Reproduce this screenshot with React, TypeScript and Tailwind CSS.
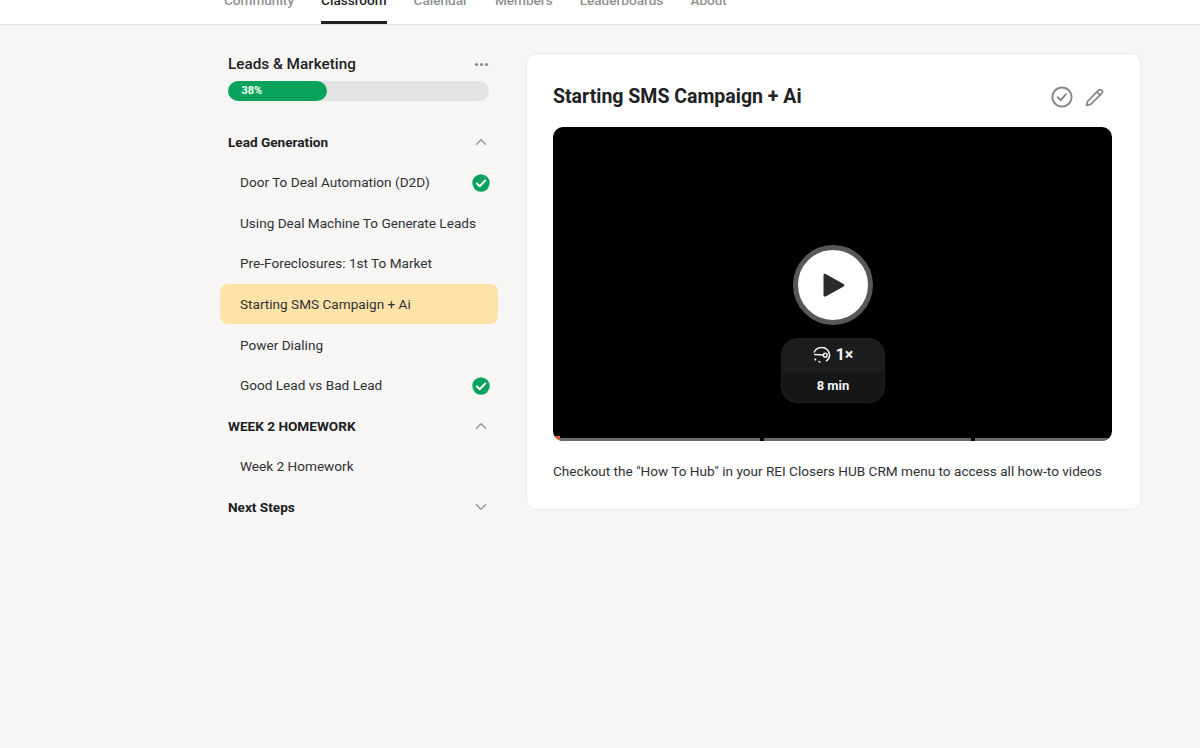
import React from 'react';
import { ChevronUp, ChevronDown, Pencil } from 'lucide-react';

const tabs = ['Community', 'Classroom', 'Calendar', 'Members', 'Leaderboards', 'About'];

type Lesson = { title: string; done?: boolean; active?: boolean };
type Section = { title: string; open: boolean; lessons: Lesson[] };

const sections: Section[] = [
    {
        title: 'Lead Generation',
        open: true,
        lessons: [
            { title: 'Door To Deal Automation (D2D)', done: true },
            { title: 'Using Deal Machine To Generate Leads' },
            { title: 'Pre-Foreclosures: 1st To Market' },
            { title: 'Starting SMS Campaign + Ai', active: true },
            { title: 'Power Dialing' },
            { title: 'Good Lead vs Bad Lead', done: true },
        ],
    },
    { title: 'WEEK 2 HOMEWORK', open: true, lessons: [{ title: 'Week 2 Homework' }] },
    { title: 'Next Steps', open: false, lessons: [] },
];

const DoneBadge = () => (
    <svg width="18" height="18" viewBox="0 0 18 18" className="shrink-0 mt-[2px]">
        <circle cx="9" cy="9" r="8.7" fill="#0aa35e" />
        <path d="M4.8 9.4l2.9 2.8 5.6-5.8" fill="none" stroke="#fff" strokeWidth="2" strokeLinecap="round" strokeLinejoin="round" />
    </svg>
);

const SpeedIcon = () => (
    <svg width="18" height="18" viewBox="0 0 18 18" fill="none" stroke="#f2f2f2" strokeWidth="1.5" strokeLinecap="round">
        <path d="M1.2 6C2.8 3 5.6 1.6 8.8 1.6a7.6 7.6 0 0 1 7.8 7.6c0 2.2-1.2 4.2-3.2 5.6" />
        <path d="M1.6 8.6l8.8.4" />
        <circle cx="12.2" cy="9.2" r="1.9" />
        <path d="M2 13l.6.9M6 15.6l.9.3" />
    </svg>
);

const App = () => {
    return (
        <div className="min-h-[748px] bg-[#f7f6f4] font-['Roboto',sans-serif] text-[#202124]">
            <div className="h-[25px] bg-white border-b border-[#e4e4e4] overflow-hidden">
                <div className="flex gap-[27px] pl-[224px] -mt-[10px] h-[34px]">
                    {tabs.map((tab) => (
                        <div
                            key={tab}
                            className={`flex items-start h-full text-[13.6px] font-medium leading-[20px] ${
                                tab === 'Classroom' ? 'text-[#202124] border-b-[3px] border-[#202124]' : 'text-[#909090]'
                            }`}
                        >
                            {tab}
                        </div>
                    ))}
                </div>
            </div>

            <div className="flex items-start gap-[28px] pl-[220px] pt-[28px]">
                <div className="w-[278px]">
                    <div className="px-2">
                        <div className="flex items-center justify-between h-[24px] mt-[-1px] pr-[1px]">
                            <span className="text-[15.3px] font-medium leading-[24px]">Leads &amp; Marketing</span>
                            <svg width="15" height="5" viewBox="0 0 15 5" fill="#8a8a8a">
                                <circle cx="2.5" cy="2.5" r="1.6" />
                                <circle cx="7.5" cy="2.5" r="1.6" />
                                <circle cx="12.5" cy="2.5" r="1.6" />
                            </svg>
                        </div>
                        <div className="mt-[5px] h-[20px] rounded-full bg-[#e4e4e4] w-[261px]">
                            <div className="flex items-center h-full w-[99px] rounded-full bg-[#0aa35e] pl-[13.5px] text-[11px] font-bold text-[#f3fff8]">
                                38%
                            </div>
                        </div>
                    </div>

                    <div className="mt-[20.5px]">
                        {sections.map((section) => (
                            <div key={section.title}>
                                <div className="flex items-center justify-between h-[40.6px] pl-2 pr-[8px]">
                                    <span className="text-[13.6px] font-bold">{section.title}</span>
                                    {section.open ? (
                                        <ChevronUp size={18} strokeWidth={2} className="text-[#999999]" />
                                    ) : (
                                        <ChevronDown size={18} strokeWidth={2} className="text-[#999999]" />
                                    )}
                                </div>
                                {section.lessons.map((lesson) => (
                                    <div
                                        key={lesson.title}
                                        className={`flex items-center justify-between h-[40.6px] pl-5 pr-[8px] text-[13.6px] rounded-lg ${
                                            lesson.active ? 'bg-[#fce4a8]' : ''
                                        }`}
                                    >
                                        <span className="text-[#303134]">{lesson.title}</span>
                                        {lesson.done && <DoneBadge />}
                                    </div>
                                ))}
                            </div>
                        ))}
                    </div>
                </div>

                <div className="w-[615px] h-[457px] bg-white rounded-[10px] border border-[#ececea] px-[26px] pt-[25px]">
                    <div className="flex items-center justify-between h-[36px] pr-[10px]">
                        <h1 className="text-[19.5px] font-bold">Starting SMS Campaign + Ai</h1>
                        <div className="flex items-center gap-[12px]">
                            <svg width="22" height="22" viewBox="0 0 22 22" fill="none" stroke="#8a8a8a" strokeWidth="2" strokeLinecap="round" strokeLinejoin="round">
                                <circle cx="11" cy="11" r="9.6" />
                                <path d="M6.8 11.4l3 2.8 5.2-6" />
                            </svg>
                            <Pencil size={19} strokeWidth={2.25} className="text-[#8a8a8a]" />
                        </div>
                    </div>

                    <div className="relative mt-[12px] h-[314px] w-[559px] bg-black rounded-[10px] overflow-hidden">
                        <div className="absolute left-1/2 top-[118px] -translate-x-1/2 flex items-center justify-center w-[80px] h-[80px] rounded-full bg-white border-[5px] border-[#58585a]">
                            <svg width="26" height="26" viewBox="0 0 26 26" fill="#2a2b2d">
                                <path d="M3.5 3.2c0-1.1 1.1-1.8 2.1-1.2l18 10c1 .5 1 1.9 0 2.4l-18 10c-1 .6-2.1-.1-2.1-1.2z" />
                            </svg>
                        </div>
                        <div className="absolute left-[228px] top-[211px] w-[104px] h-[65px] rounded-[16px] overflow-hidden text-white font-bold bg-[#151618] border border-[#202123]">
                            <div className="flex items-center justify-center gap-[5px] h-[33px] pb-[2px] bg-[#1b1c1e] text-base text-[#f2f2f2]">
                                <SpeedIcon />
                                <span>1×</span>
                            </div>
                            <div className="flex items-center justify-center h-[30px] pb-[3px] text-[13px] text-[#f2f2f2]">8 min</div>
                        </div>
                        <div className="absolute inset-x-0 bottom-0 flex h-[3px] bg-[#6a6a6a]">
                            <div className="absolute left-0 bottom-0 w-[7px] h-[5px] bg-[#e0603a]" />
                            <div className="absolute left-[207px] w-[4px] h-full bg-black" />
                            <div className="absolute left-[418px] w-[4px] h-full bg-black" />
                        </div>
                    </div>

                    <p className="mt-[20px] text-[13.6px] leading-[20px] text-[#303134] whitespace-nowrap">
                        Checkout the "How To Hub" in your REI Closers HUB CRM menu to access all how-to videos
                    </p>
                </div>
            </div>
        </div>
    );
};

export default App;
